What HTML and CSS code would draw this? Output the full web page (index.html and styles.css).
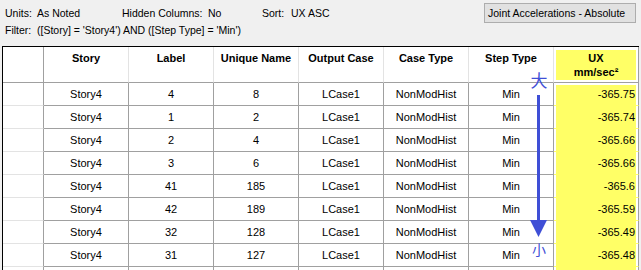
FILE: index.html
```html
<!DOCTYPE html>
<html>
<head>
<meta charset="utf-8">
<link rel="stylesheet" href="styles.css">
</head>
<body>
<div class="page">
  <div class="info">
    <div class="lines">
      <div class="line">
        <span class="k k1">Units:</span><span class="v v1">As Noted</span>
        <span class="k k2">Hidden Columns:</span><span class="v v2">No</span>
        <span class="k k3">Sort:</span><span class="v">UX ASC</span>
      </div>
      <div class="line">
        <span class="k k1">Filter:</span><span class="v">([Story] = 'Story4') AND ([Step Type] = 'Min')</span>
      </div>
    </div>
    <div class="tablename">Joint Accelerations - Absolute</div>
  </div>
  <div class="grid">
    <div class="hc rh"></div>
    <div class="hc">Story</div>
    <div class="hc">Label</div>
    <div class="hc">Unique Name</div>
    <div class="hc">Output Case</div>
    <div class="hc">Case Type</div>
    <div class="hc">Step Type</div>
    <div class="hc sel"><div class="selbox">UX<br>mm/sec²</div></div>

    <div class="c rh"></div><div class="c">Story4</div><div class="c">4</div><div class="c">8</div><div class="c">LCase1</div><div class="c">NonModHist</div><div class="c">Min</div><div class="c num first">-365.75</div>
    <div class="c rh"></div><div class="c">Story4</div><div class="c">1</div><div class="c">2</div><div class="c">LCase1</div><div class="c">NonModHist</div><div class="c">Min</div><div class="c num">-365.74</div>
    <div class="c rh"></div><div class="c">Story4</div><div class="c">2</div><div class="c">4</div><div class="c">LCase1</div><div class="c">NonModHist</div><div class="c">Min</div><div class="c num">-365.66</div>
    <div class="c rh"></div><div class="c">Story4</div><div class="c">3</div><div class="c">6</div><div class="c">LCase1</div><div class="c">NonModHist</div><div class="c">Min</div><div class="c num">-365.66</div>
    <div class="c rh"></div><div class="c">Story4</div><div class="c">41</div><div class="c">185</div><div class="c">LCase1</div><div class="c">NonModHist</div><div class="c">Min</div><div class="c num">-365.6</div>
    <div class="c rh"></div><div class="c">Story4</div><div class="c">42</div><div class="c">189</div><div class="c">LCase1</div><div class="c">NonModHist</div><div class="c">Min</div><div class="c num">-365.59</div>
    <div class="c rh"></div><div class="c">Story4</div><div class="c">32</div><div class="c">128</div><div class="c">LCase1</div><div class="c">NonModHist</div><div class="c">Min</div><div class="c num">-365.49</div>
    <div class="c rh"></div><div class="c">Story4</div><div class="c">31</div><div class="c">127</div><div class="c">LCase1</div><div class="c">NonModHist</div><div class="c">Min</div><div class="c num">-365.48</div>
    <div class="c rh last"></div><div class="c last"></div><div class="c last"></div><div class="c last"></div><div class="c last"></div><div class="c last"></div><div class="c last"></div><div class="c num last"></div>

    <div class="annot">
      <span class="big">大</span>
      <svg class="arrow" width="18" height="144" viewBox="0 0 18 144">
        <rect x="7" y="0" width="3" height="126" fill="#3f4fd6"/>
        <polygon points="0,125 17,125 8.5,142" fill="#3f4fd6"/>
      </svg>
      <span class="small">小</span>
    </div>
  </div>
</div>
</body>
</html>
```

FILE: styles.css
```css
html, body {
  margin: 0;
  padding: 0;
  background: #f0f0f0;
  width: 641px;
  height: 270px;
  overflow: hidden;
}
body {
  font-family: "Liberation Sans", Arial, sans-serif;
  font-size: 11px;
  color: #000;
}
.page {
  display: flex;
  flex-direction: column;
}
.info {
  height: 46px;
  display: flex;
  justify-content: space-between;
  align-items: flex-start;
}
.lines {
  padding-left: 5px;
  padding-top: 6px;
  display: flex;
  flex-direction: column;
  gap: 3px;
}
.line {
  display: flex;
  height: 14px;
  line-height: 14px;
  white-space: nowrap;
  font-size: 10.5px;
}
.k1 { width: 32px; }
.v1 { width: 85px; }
.k2 { width: 86px; }
.v2 { width: 54px; }
.k3 { width: 29px; }
.tablename {
  margin-top: 3px;
  margin-right: 5px;
  width: 152px;
  height: 20px;
  box-sizing: border-box;
  border: 1px solid #adadad;
  background: #e1e1e1;
  padding-left: 3px;
  line-height: 18px;
  font-size: 10.5px;
  white-space: nowrap;
}
.grid {
  position: relative;
  margin-left: 2px;
  width: 636px;
  border-left: 1px solid #000;
  border-top: 1px solid #000;
  background: #fff;
  display: grid;
  grid-template-columns: 41px repeat(7, 85px);
  grid-template-rows: 36px repeat(8, 23px) 3px;
}
.hc {
  box-sizing: border-box;
  border-right: 1px solid #e3e3e3;
  border-bottom: 1px solid #a0a0a0;
  font-weight: bold;
  text-align: center;
  line-height: 14px;
  padding-top: 4px;
}
.hc.rh {
  border-right-color: #a0a0a0;
}
.hc.sel {
  padding: 3px 2px 2px 2px;
  border-right-color: #a0a0a0;
}
.selbox {
  background: #ffff66;
  height: 100%;
  padding-top: 1px;
  box-sizing: border-box;
}
.c {
  box-sizing: border-box;
  border-right: 1px solid #a0a0a0;
  border-bottom: 1px solid #a0a0a0;
  text-align: center;
  line-height: 22px;
  white-space: nowrap;
}
.c.rh {
  border-bottom-color: #e3e3e3;
}
.c.last {
  border-bottom: none;
}
.c.num {
  text-align: right;
  padding-right: 3px;
  background: #ffff66;
  border-bottom-color: #ffff66;
  box-shadow: inset 2px 0 #fff, inset -2px 0 #fff;
}
.c.num.first {
  box-shadow: inset 2px 0 #fff, inset -2px 0 #fff, inset 0 2px #fff;
}
.annot {
  position: absolute;
  left: 524px;
  top: 24px;
  width: 24px;
  display: flex;
  flex-direction: column;
  align-items: center;
  color: #3f4fd6;
  font-family: "Noto Sans CJK SC", sans-serif;
  pointer-events: none;
}
.big {
  font-size: 17px;
  line-height: 18px;
}
.arrow {
  display: block;
  margin-top: 6px;
}
.small {
  font-size: 14px;
  line-height: 15px;
  margin-top: 3px;
}
```
